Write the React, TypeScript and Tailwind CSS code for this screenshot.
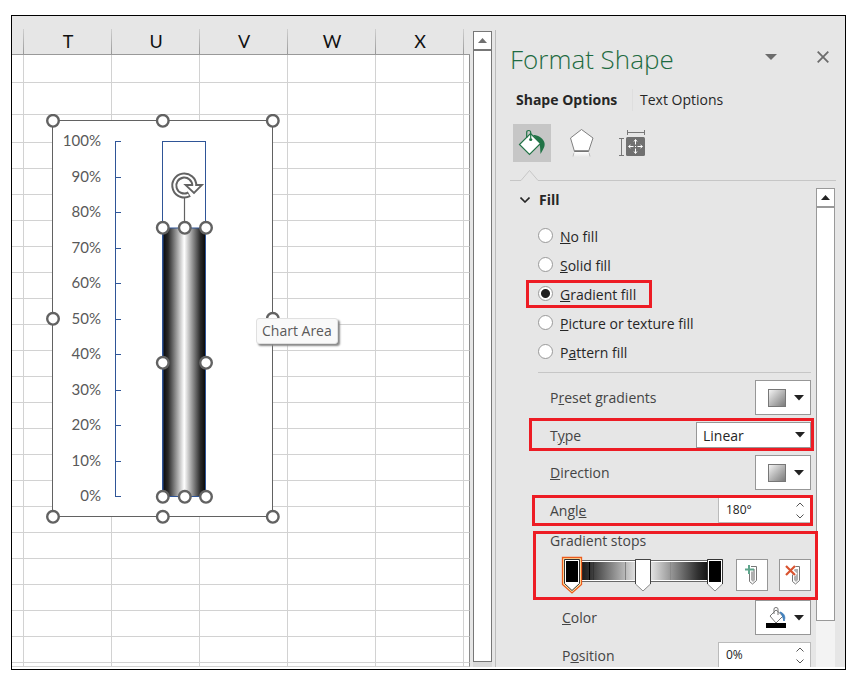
import React, { useState } from "react";

const COLUMNS = ["T", "U", "V", "W", "X"];
const ROW_HEIGHTS = [
  "h-[28px]", "h-[32px]", "h-[28px]",
  ...Array.from({ length: 20 }, () => "h-[26px]"),
  "h-[4px]",
];
const TICKS = [100, 90, 80, 70, 60, 50, 40, 30, 20, 10, 0];

function Handle({ x, y }: { x: number; y: number }) {
  return <circle cx={x} cy={y} r="5.8" fill="#fff" stroke="#626262" strokeWidth="2.4" />;
}

function Chart() {
  const left = 7;
  const mid = 116.8;
  const right = 226.8;
  return (
    <svg width="234" height="410" viewBox="0 0 234 410" role="img" aria-label="Thermometer chart" className="block">
      <defs>
        <linearGradient id="tube">
          <stop offset="0" stopColor="#080808" />
          <stop offset="0.12" stopColor="#2a2a2a" />
          <stop offset="0.5" stopColor="#ffffff" />
          <stop offset="0.88" stopColor="#2a2a2a" />
          <stop offset="1" stopColor="#080808" />
        </linearGradient>
      </defs>
      <rect x="6.5" y="6.5" width="220" height="396" fill="#fff" stroke="#626262" />
      <path d="M69.500 27v356" stroke="#2f5597" />
      {TICKS.map((t, i) => {
        const y = 27.5 + Math.round(i * 35.5);
        return (
          <g key={t}>
            <path d={`M69 ${y}h6`} stroke="#2f5597" />
            <text x="55" y={y + 4} textAnchor="end" fontSize="15" fill="#595959" className="font-['Lato',sans-serif]">
              {t}%
            </text>
          </g>
        );
      })}
      <rect x="116.500" y="27.500" width="43" height="355" fill="#fff" stroke="#2f5597" />
      <rect x="117" y="114" width="42.500" height="268.500" fill="url(#tube)" stroke="#2f5597" />
      <path d="M138.500 84v24" stroke="#626262" strokeWidth="1.200" />
      <path d="M148.300 71.500A10 10 0 1 0 143.300 80.200" fill="none" stroke="#626262" strokeWidth="6" />
      <path d="M148.300 72A10 10 0 1 0 142.500 80.600" fill="none" stroke="#fff" strokeWidth="2" />
      <path d="M139.500 71h16.500l-8 8Z" fill="#fff" stroke="#626262" strokeWidth="1.800" />
      <path d="M147.200 72h2v-2h-2Z" fill="#fff" />
      {[left, mid, right].map((x) => <Handle key={`t${x}`} x={x} y={6.8} />)}
      {[left, right].map((x) => <Handle key={`m${x}`} x={x} y={204.8} />)}
      {[left, mid, right].map((x) => <Handle key={`b${x}`} x={x} y={402.8} />)}
      {[116.8, 138.8, 160].map((x) => <Handle key={`bt${x}`} x={x} y={113.8} />)}
      {[116.8, 160].map((x) => <Handle key={`bm${x}`} x={x} y={248.8} />)}
      {[116.8, 138.8, 160].map((x) => <Handle key={`bb${x}`} x={x} y={382.8} />)}
    </svg>
  );
}

function Sheet() {
  return (
    <section className="relative min-w-0 flex-1 overflow-hidden bg-white">
      <div className="h-[13px] bg-[#e6e6e6]" />
      <table className="w-full table-fixed border-separate border-spacing-0">
        <colgroup>
          <col className="w-[12px]" />
          {COLUMNS.map((c) => <col key={c} className="w-[88px]" />)}
          <col />
        </colgroup>
        <thead>
          <tr className="h-[26px] bg-[#e6e6e6]">
            <th className="border-b border-[#999] bg-[linear-gradient(#cfcfcf,#999)] bg-[length:1px_100%] bg-right bg-no-repeat p-0" />
            {COLUMNS.map((c) => (
              <th key={c} scope="col" className="border-b border-[#999] bg-[linear-gradient(#cfcfcf,#999)] bg-[length:1px_100%] bg-right bg-no-repeat p-0 font-['Lato',sans-serif] text-lg leading-[25px] font-normal text-[#111]">
                {c}
              </th>
            ))}
            <th className="border-b border-[#999] p-0" />
          </tr>
        </thead>
        <tbody>
          {ROW_HEIGHTS.map((h, i) => (
            <tr key={i} className={h}>
              <td className="border-r border-b border-[#d2d2d2] p-0" />
              {COLUMNS.map((c) => <td key={c} className="border-r border-b border-[#d2d2d2] p-0" />)}
              <td className="border-r border-b border-r-[#8c8c8c] border-b-[#d2d2d2] p-0" />
            </tr>
          ))}
        </tbody>
      </table>
      <div className="absolute top-[98px] left-[34px]"><Chart /></div>
      <div role="tooltip" className="absolute top-[302px] left-[244px] rounded-[3px] border border-[#e0e0e0] bg-[#f9f9f9] px-[5px] text-sm leading-6 text-[#5a5a5a] shadow-[2px_2px_2px_#888]">
        Chart Area
      </div>
    </section>
  );
}

function SheetScrollbar() {
  return (
    <div className="flex w-[26px] shrink-0 flex-col border-r border-[#bcbcbc] bg-[#e6e6e6] pr-[3px] pl-[3px] [border-image:linear-gradient(to_bottom,#e6e6e6_15px,#bcbcbc_15px)_1]">
      <button aria-label="Scroll up" className="mt-[15px] flex h-[19px] w-[19px] items-center justify-center border border-[#777] bg-white">
        <svg width="9" height="5" viewBox="0 0 9 5"><path d="M4.500 0L9 5H0Z" fill="#707070" /></svg>
      </button>
      <div className="w-[19px] flex-1 border border-[#777] bg-white" />
      <div className="h-[5px] w-[19px] bg-[#d9d9d9]" />
    </div>
  );
}

function Triangle() {
  return <svg width="10" height="6" viewBox="0 0 10 6" className="pointer-events-none shrink-0"><path d="M0 0h10L5 5.500Z" fill="#222" /></svg>;
}

function GradientButton({ id }: { id: string }) {
  return (
    <button id={id} className="flex h-[35px] w-[56px] items-center justify-end gap-2 border border-[#979797] bg-white pr-[6px]">
      <span className="h-[18px] w-[18px] border border-[#777] bg-linear-to-br from-[#f4f4f4] to-[#7c7c7c]" />
      <Triangle />
    </button>
  );
}

function Spinner({ id, initial }: { id: string; initial: string }) {
  const [value, setValue] = useState(initial);
  const step = (d: number) => setValue((v) => `${parseInt(v, 10) + d}${v.slice(-1)}`);
  return (
    <div className="flex h-[26px] w-[93px] border border-[#bbb] bg-white">
      <input id={id} value={value} onChange={(e) => setValue(e.target.value)} className="min-w-0 flex-1 bg-transparent pl-[7px] text-xs text-[#222] outline-none" />
      <div className="flex w-[21px] flex-col items-center justify-around">
        <button aria-label="Increase" onClick={() => step(1)}><svg width="8" height="5" viewBox="0 0 8 5" className="block"><path d="M.5 4.500L4 1l3.500 3.500" fill="none" stroke="#555" /></svg></button>
        <button aria-label="Decrease" onClick={() => step(-1)}><svg width="8" height="5" viewBox="0 0 8 5" className="block"><path d="M.5 .5L4 4 7.500 .5" fill="none" stroke="#555" /></svg></button>
      </div>
    </div>
  );
}

function GradientTrack() {
  return (
    <svg width="166" height="40" viewBox="558 555 166 40" role="img" aria-label="Gradient stops" className="block shrink-0">
      <defs>
        <linearGradient id="track">
          <stop offset="0" stopColor="#000" />
          <stop offset="0.12" stopColor="#303030" />
          <stop offset="0.5" stopColor="#fff" />
          <stop offset="0.88" stopColor="#303030" />
          <stop offset="1" stopColor="#000" />
        </linearGradient>
      </defs>
      <rect x="572" y="560" width="143" height="22" fill="#686868" />
      <rect x="572" y="561" width="143" height="20" fill="#fff" />
      <rect x="572" y="562" width="143" height="18" fill="url(#track)" />
      <path d="M589.500 562v18" stroke="#000" />
      <path d="M593.500 562v18" stroke="#333" />
      <path d="M625.500 562v18" stroke="#808080" />
      <path d="M670.500 562v18" stroke="#8a8a8a" />
      <path d="M562.500 557.500h19v27l-9.500 8.500-9.500-8.500Z" fill="#ffe9a8" stroke="#ec5b1c" strokeWidth="1.300" />
      <path d="M564.500 559.500h15v24l-7.500 7-7.500-7Z" fill="#fff" stroke="#333" />
      <rect x="566" y="561" width="12" height="21" fill="#000" />
      <path d="M635.500 559.500h15v24.500l-7.500 7-7.500-7Z" fill="#fff" stroke="#8a8a8a" />
      <path d="M635.500 584v-24.500h15V584" fill="none" stroke="#444" />
      <path d="M707.500 559.500h15v24.500l-7.500 7-7.500-7Z" fill="#fff" stroke="#8a8a8a" />
      <path d="M707.500 584v-24.500h15V584" fill="none" stroke="#333" />
      <rect x="709" y="561" width="12" height="21" fill="#000" />
    </svg>
  );
}

function StopButton({ kind }: { kind: "add" | "remove" }) {
  return (
    <button aria-label={kind === "add" ? "Add gradient stop" : "Remove gradient stop"} className="flex h-[32px] w-[32px] shrink-0 border border-[#979797] bg-white">
      <svg width="30" height="30" viewBox="0 0 30 30">
        <path d="M12.500 6.500h7v14l-4 3.500-3-2.500V14" fill="#fff" stroke="#777" />
        <path d="M14 9h4v11l-2 2-2-2Z" fill="#b0b0b0" />
        {kind === "add" ? (
          <>
            <path d="M12 5v9M8 9.500h8" stroke="#fff" strokeWidth="4" />
            <path d="M12 5v9M8 9.500h9" stroke="#5fa58c" strokeWidth="2" />
          </>
        ) : (
          <>
            <path d="M6 6l10 9M15 6l-9 9" stroke="#fff" strokeWidth="4" />
            <path d="M6 6l9 9M15 6l-9 9" stroke="#d9532f" strokeWidth="2.200" />
          </>
        )}
      </svg>
    </button>
  );
}

function PanelHeader() {
  return (
    <header className="shrink-0">
      <div className="flex h-[58px] items-center pt-[24px] pr-[16px] pl-[14px]">
        <h1 className="flex-1 pt-[3px] text-[26px] leading-[30px] font-light text-[#1e6b41]">Format Shape</h1>
        <button aria-label="Pane options" className="mr-[40px]"><svg width="12" height="6" viewBox="0 0 12 6" className="block"><path d="M0 0h12L6 6Z" fill="#6c6c6c" /></svg></button>
        <button aria-label="Close"><svg width="12" height="12" viewBox="0 0 12 12" className="block"><path d="M.7 .7l10.600 10.600M11.300 .7L.7 11.300" stroke="#6c6c6c" strokeWidth="1.800" /></svg></button>
      </div>
      <nav className="mt-[14px] flex h-[23px] items-center pl-[20px] text-sm text-[#262626]">
        <button className="w-[117px] border-r border-[#dedede] text-left leading-[22px] font-bold whitespace-nowrap">Shape Options</button>
        <button className="pl-[7px]">Text Options</button>
      </nav>
      <div className="mt-[13px] flex gap-[11px] pl-[17px]">
        <button aria-label="Fill & Line" className="h-[38px] w-[38px] bg-[#c6c6c6]">
          <svg width="38" height="38" viewBox="0 0 38 38">
            <path d="M20 11c5 0 9 2.500 11 6.500 1.500 3.500.5 6-3.500 12.500-.3-5-.2-8-1.500-11.500Z" fill="#217346" />
            <path d="M17.500 9.500L27.500 19.500 16.500 30.500 6.500 20.500Z" fill="#fff" stroke="#217346" strokeWidth="1.200" />
            <path d="M13.700 14V8.500q0-2 2-2t2 2V14" fill="none" stroke="#217346" strokeWidth="1.200" />
            <circle cx="17.700" cy="15.500" r="1.600" fill="#217346" />
          </svg>
        </button>
        <button aria-label="Effects" className="h-[38px] w-[38px]">
          <svg width="38" height="38" viewBox="0 0 38 38">
            <defs><linearGradient id="glow" x2="0" y2="1"><stop stopColor="#fff" /><stop offset="1" stopColor="#e6e6e6" /></linearGradient></defs>
            <path d="M11.500 28h16l1 5h-18Z" fill="url(#glow)" />
            <path d="M12 28.500l-1 4M27 28.500l1 4" stroke="#bbb" />
            <path d="M19.500 5.500L31 14l-4.500 13.500h-14L8.500 14Z" fill="#fff" stroke="#808080" />
            <path d="M12.500 27h14" stroke="#707070" strokeWidth="1.500" />
          </svg>
        </button>
        <button aria-label="Size & Properties" className="h-[38px] w-[45px]">
          <svg width="45" height="38" viewBox="0 0 45 38">
            <path d="M16.500 6v5M33.500 6v5M16.500 8.500h17M8 14.500h5M8 31.500h5M10.500 14.500v17" stroke="#777" fill="none" />
            <rect x="15" y="13" width="19" height="19" rx="1.500" fill="#707070" />
            <path d="M24.500 16v4.500M24.500 24.500V29M18 22.500h4.500M26.500 22.500H31M24 22.500h1M23 17.500l1.500-2 1.500 2M23 27.500l1.500 2 1.500-2M19.500 21l-2 1.500 2 1.500M29.500 21l2 1.500-2 1.500" stroke="#fff" fill="none" />
          </svg>
        </button>
      </div>
      <div className="mt-2 mr-[9px] ml-[14px] flex h-[11px]">
        <div className="w-[11px] border-b border-[#c6c6c6]" />
        <svg width="17" height="11" viewBox="0 0 17 11"><path d="M0 10.500L8.500 .5l8.500 10" fill="none" stroke="#c6c6c6" /></svg>
        <div className="flex-1 border-b border-[#c6c6c6]" />
      </div>
    </header>
  );
}

const FILLS: [string, string, string][] = [
  ["", "N", "o fill"],
  ["", "S", "olid fill"],
  ["", "G", "radient fill"],
  ["", "P", "icture or texture fill"],
  ["P", "a", "ttern fill"],
];

function FillOptions() {
  const [selected, setSelected] = useState(2);
  return (
    <div role="radiogroup" aria-label="Fill" className="mt-[10px] border-b border-[#c6c6c6] pb-[5px]">
      {FILLS.map(([before, key, after], i) => (
        <div key={i} className="relative flex h-[29px] items-center gap-[7px]">
          <input
            id={`fill-${i}`}
            type="radio"
            name="fill"
            checked={selected === i}
            onChange={() => setSelected(i)}
            className="mb-[2px] h-[15px] w-[15px] appearance-none rounded-full border border-[#999] bg-white checked:bg-[radial-gradient(circle,#222_4px,#fff_5px)]"
          />
          <label htmlFor={`fill-${i}`}>{before}<u>{key}</u>{after}</label>
          {i === 2 && <span className="pointer-events-none absolute top-0 -left-3 h-[28px] w-[126px] border-3 border-[#ed1c24]" />}
        </div>
      ))}
    </div>
  );
}

const ROW = "relative flex items-center justify-between pl-3 text-[#444]";

function PanelBody() {
  return (
    <div className="mt-[7px] flex min-h-0 flex-1 pr-[10px] text-sm text-[#262626]">
      <div className="min-w-0 flex-1 pr-[5px] pl-[42px]">
        <button className="-ml-[18px] flex h-6 items-center gap-[9px] font-bold">
          <svg width="10" height="6" viewBox="0 0 10 6"><path d="M.5 .5L5 5 9.500 .5" fill="none" stroke="#262626" strokeWidth="1.600" /></svg>
          Fill
        </button>
        <FillOptions />
        <div className="mt-[7px] flex flex-col gap-[7px]">
          <div className={ROW}>
            <label htmlFor="preset">P<u>r</u>eset gradients</label>
            <GradientButton id="preset" />
          </div>
          <div className={ROW}>
            <label htmlFor="type" className="pt-[2px]">T<u>y</u>pe</label>
            <div className="grid w-[115px] items-center">
              <select id="type" className="col-start-1 row-start-1 h-[26px] appearance-none border border-[#979797] bg-white pt-[2px] pl-[6px] text-[#262626]">
                <option>Linear</option>
                <option>Radial</option>
              </select>
              <span className="pointer-events-none col-start-1 row-start-1 mr-[6px] justify-self-end"><Triangle /></span>
            </div>
            <span className="pointer-events-none absolute -top-1 -right-[3px] -left-[9px] h-[33px] border-3 border-[#ed1c24]" />
          </div>
          <div className={ROW}>
            <label htmlFor="direction"><u>D</u>irection</label>
            <GradientButton id="direction" />
          </div>
          <div className={ROW}>
            <label htmlFor="angle" className="pt-[2px]">Angl<u>e</u></label>
            <Spinner id="angle" initial="180°" />
            <span className="pointer-events-none absolute -top-[2px] -right-[2px] -left-[6px] h-[31px] border-3 border-[#ed1c24]" />
          </div>
        </div>
        <div className="relative mt-2 h-[69px] pl-3 text-[#444]">
          <p className="leading-5">Gradient stops</p>
          <div className="mt-1 -mr-[2px] flex items-center pl-2">
            <GradientTrack />
            <div className="ml-3 flex gap-[11px]">
              <StopButton kind="add" />
              <StopButton kind="remove" />
            </div>
          </div>
          <span className="pointer-events-none absolute top-0 -right-[7px] -left-[5px] h-[69px] border-3 border-[#ed1c24]" />
        </div>
        <div className="flex items-center justify-between pl-6 text-[#444]">
          <label htmlFor="color"><u>C</u>olor</label>
          <button id="color" className="flex h-[35px] w-[56px] items-center justify-end gap-2 border border-[#979797] bg-white pr-[6px]">
            <svg width="20" height="22" viewBox="0 0 20 22" className="mb-[2px]">
              <path d="M10 4l7 6-7 7-6-7Z" fill="#fff" stroke="#777" />
              <path d="M8 8V3q0-1.500 2-1.500T12 3v6" fill="none" stroke="#777" />
              <path d="M14 6c4 1 6 5 4 9-1-3-1-5-4-9Z" fill="#4281bd" stroke="#4281bd" />
              <rect y="17" width="20" height="5" fill="#000" />
            </svg>
            <Triangle />
          </button>
        </div>
        <div className="mt-[7px] flex items-center justify-between pl-6 text-[#444]">
          <label htmlFor="position" className="pt-[2px]">P<u>o</u>sition</label>
          <Spinner id="position" initial="0%" />
        </div>
      </div>
      <div className="flex w-[19px] shrink-0 flex-col bg-[#f3f3f3]">
        <button aria-label="Scroll options up" className="flex h-[19px] items-center justify-center border border-[#999] bg-white">
          <svg width="9" height="5" viewBox="0 0 9 5"><path d="M4.500 0L9 5H0Z" fill="#222" /></svg>
        </button>
        <div className="mb-[46px] flex-1 border border-[#999] bg-white" />
      </div>
    </div>
  );
}

export default function App() {
  return (
    <div className="bg-white pt-[15px] pr-[18px] pb-6 pl-[11px] font-['Open_Sans','Noto_Sans',sans-serif]">
      <main className="border border-black pb-[2px]">
        <div className="flex overflow-hidden">
          <Sheet />
          <SheetScrollbar />
          <aside aria-label="Format Shape" className="flex h-[651px] w-[349px] shrink-0 flex-col bg-[#e6e6e6]">
            <PanelHeader />
            <PanelBody />
          </aside>
        </div>
      </main>
    </div>
  );
}
